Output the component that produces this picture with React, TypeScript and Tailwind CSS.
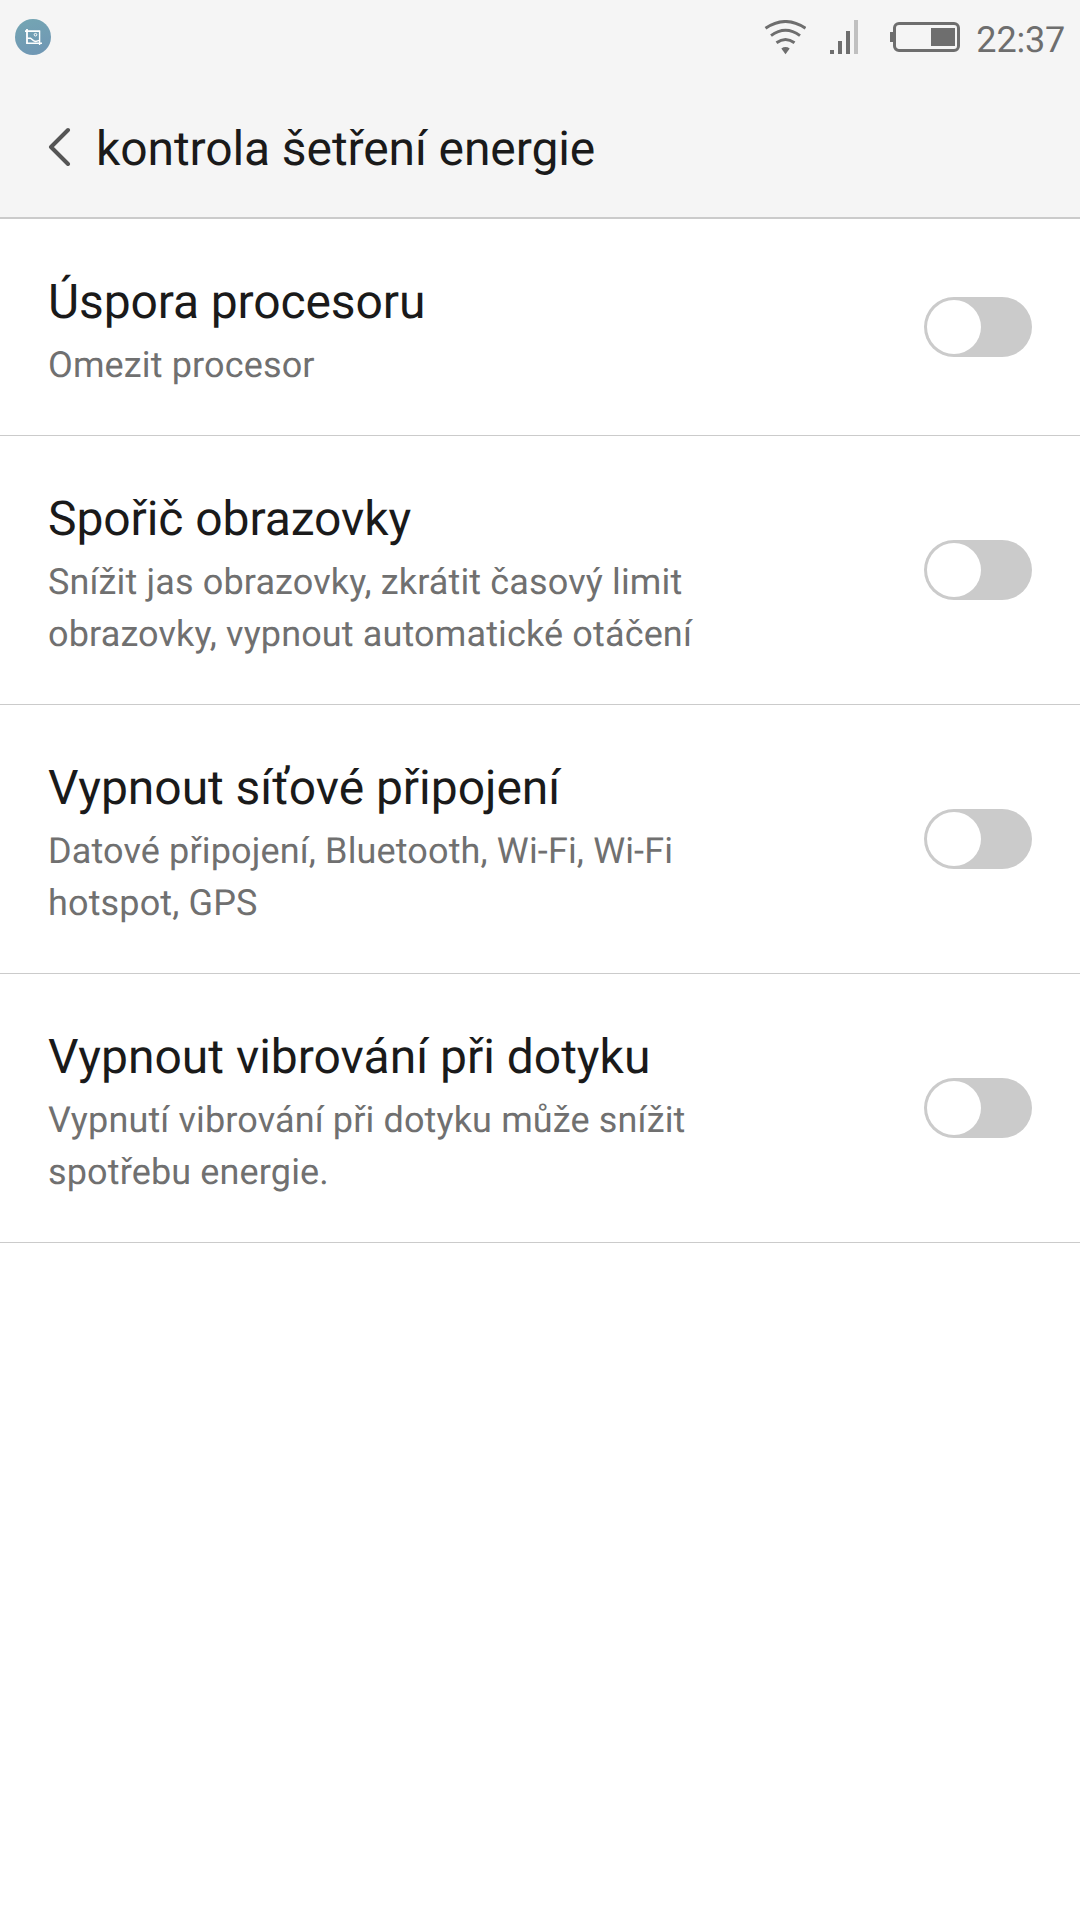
import React from 'react';

const settings = [
  { title: 'Úspora procesoru', tracking: 'tracking-[-0.12px]', lines: ['Omezit procesor'] },
  { title: 'Spořič obrazovky', tracking: 'tracking-[-0.08px]', lines: ['Snížit jas obrazovky, zkrátit časový limit', 'obrazovky, vypnout automatické otáčení'] },
  { title: 'Vypnout síťové připojení', tracking: 'tracking-[-0.04px]', lines: ['Datové připojení, Bluetooth, Wi-Fi, Wi-Fi', 'hotspot, GPS'] },
  { title: 'Vypnout vibrování při dotyku', tracking: 'tracking-normal', lines: ['Vypnutí vibrování při dotyku může snížit', 'spotřebu energie.'] },
];

function ScreenshotBadge() {
  return (
    <svg width="36" height="36" viewBox="0 0 36 36" fill="none" stroke="#fff">
      <defs>
        <linearGradient id="badge" x1="0" y1="0" x2="0.3" y2="1">
          <stop offset="0" stopColor="#74a6b3" />
          <stop offset="1" stopColor="#7098b4" />
        </linearGradient>
      </defs>
      <circle cx="18" cy="18" r="18" fill="url(#badge)" stroke="none" />
      <path d="M10 12.2h14.7M12 10v14.4" strokeWidth="1.8" />
      <path d="M11.2 24.2H27M24.6 11.5V26" strokeWidth="1.4" />
      <circle cx="20.5" cy="15.7" r="1.3" strokeWidth="1" />
      <path d="M12.5 19.3h3l3 2.3 2 .8 4-1" strokeWidth="1.4" />
    </svg>
  );
}

function Wifi() {
  return (
    <svg width="42" height="35" viewBox="-0.5 0 42 35" fill="none" stroke="#6e6e6e" strokeWidth="3">
      <path d="M1 8.3Q21-5.3 41 8.3M6.5 15.6Q21 5 35.5 15.6M12 22.7Q21 16.3 30 22.7" />
      <path d="M16.8 28.5Q21 25.7 25.200 28.500L21 34.200Z" fill="#6e6e6e" stroke="none" />
    </svg>
  );
}

function Signal() {
  return (
    <svg width="28" height="34" viewBox="0 0 28 34" fill="#6e6e6e">
      <path d="M0 30h4v4H0zM8 21h4v13H8zM16 11h4v23h-4z" />
      <path d="M24 0h4v34h-4z" fill="#c0c0c0" />
    </svg>
  );
}

function Battery() {
  return (
    <svg width="70" height="30" viewBox="0 0 70 30" fill="#6e6e6e">
      <path d="M0 10h4v10H0zM41 6h24v18H41z" />
      <rect x="4.500" y="1.500" width="64" height="27" rx="4.500" fill="none" stroke="#6e6e6e" strokeWidth="3" />
    </svg>
  );
}

function Toggle() {
  return (
    <button role="switch" aria-checked={false} className="flex h-[60px] w-[108px] shrink-0 items-center rounded-full bg-[#cbcbcb] p-[3px]">
      <span className="size-[54px] rounded-full bg-white" />
    </button>
  );
}

export default function App() {
  return (
    <div className="h-[1920px] w-[1080px] overflow-hidden bg-white font-['Roboto',sans-serif] [text-rendering:geometricPrecision]">
      <header className="h-[219px] border-b-2 border-[#cbcbcb] bg-[#f5f5f5]">
        <div className="flex h-[74px] items-center justify-between pr-[15px] pl-[15px]">
          <ScreenshotBadge />
          <div className="flex items-center text-[#6e6e6e]">
            <Wifi />
            <div className="ml-6"><Signal /></div>
            <div className="ml-8"><Battery /></div>
            <span className="ml-[15px] w-[90px] pt-[6px] text-right text-[36px] leading-none tracking-[-0.2px]">22:37</span>
          </div>
        </div>
        <div className="flex h-[144px] items-center pl-[48px]">
          <svg width="24" height="40" viewBox="0 0 24 40" fill="none" stroke="#555" strokeWidth="4" strokeLinecap="round" strokeLinejoin="round"><path d="M20 4L3 21l17 17" /></svg>
          <h1 className="ml-[24px] pt-[5px] text-[48px] leading-none tracking-[-0.1px] text-[#1a1a1a]">kontrola šetření energie</h1>
        </div>
      </header>
      <main>
        {settings.map((s) => (
          <section key={s.title} className="flex items-center justify-between border-b border-[#cbcbcb] px-[48px] pt-[53px] pb-[44px]">
            <div>
              <h2 className={`text-[48px] leading-[60px] text-[#1a1a1a] ${s.tracking}`}>{s.title}</h2>
              <p className="mt-[7px] text-[36px] leading-[52px] tracking-[0.14px] text-[#707070]">{s.lines.map((l) => <span key={l} className="block">{l}</span>)}</p>
            </div>
            <div className="-mt-[9px]"><Toggle /></div>
          </section>
        ))}
      </main>
    </div>
  );
}
